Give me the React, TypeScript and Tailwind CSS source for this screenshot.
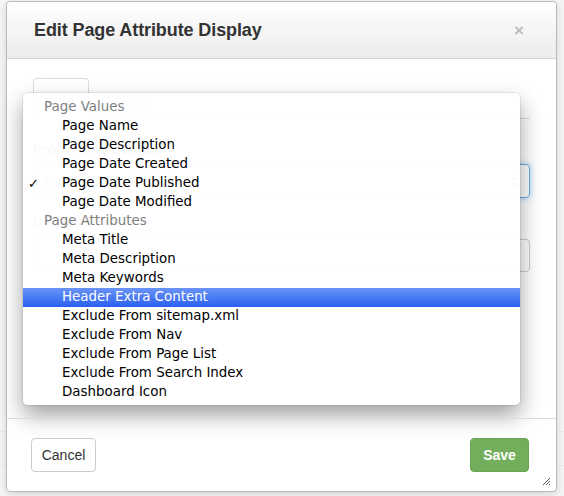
import React from "react";

const groups: { label: string; items: string[] }[] = [
  {
    label: "Page Values",
    items: ["Page Name", "Page Description", "Page Date Created", "Page Date Published", "Page Date Modified"],
  },
  {
    label: "Page Attributes",
    items: [
      "Meta Title",
      "Meta Description",
      "Meta Keywords",
      "Header Extra Content",
      "Exclude From sitemap.xml",
      "Exclude From Nav",
      "Exclude From Page List",
      "Exclude From Search Index",
      "Dashboard Icon",
    ],
  },
];

export default function App() {
  return (
    <div className="w-[564px] h-[496px] bg-[#f6f6f6] relative overflow-hidden font-['Liberation_Sans',Arial,sans-serif] pt-[1px] pl-[6px]">
      {/* faint backdrop lines */}
      <div className="absolute left-0 right-0 top-[431px] h-px bg-[#ececec]" />
      <div className="absolute left-0 right-0 top-[465px] h-px bg-[#ececec]" />
      <div className="relative w-[551px] h-[491px] bg-white border border-[#b7bcc2] rounded-[4px] flex flex-col shadow-[0_2px_8px_rgba(0,0,0,0.15)]">
        {/* header */}
        <div className="h-[57px] shrink-0 flex items-center justify-between pl-[27px] pr-[32px] border-b border-[#d4d4d4] bg-gradient-to-b from-white to-[#ececec] rounded-t-[4px]">
          <span className="text-[18px] font-bold text-[#333] tracking-[-0.1px] mt-[1px]">Edit Page Attribute Display</span>
          <span className="text-[#bdbdbd] text-[17px] font-bold leading-none mt-[1px]">×</span>
        </div>
        {/* body */}
        <div className="flex-1 relative px-[26px] pt-[19px]">
          <div className="flex items-end border-b border-[#dddddd] h-[41px]">
            <div className="w-[56px] h-[41px] border border-[#dddddd] border-b-white rounded-t-[4px] -mb-px flex items-center justify-center pt-[8px] text-[14px] text-[#555]">
              Add
            </div>
            <div className="px-[15px] h-[41px] flex items-center pt-[8px] text-[14px] text-[#337ab7]">Options</div>
          </div>
          <div className="mt-[20px] text-[14px] font-bold text-[#333] leading-[20px]">Property to Display</div>
          <div className="mt-[5px] h-[34px] border border-[#66afe9] rounded-[4px] shadow-[0_0_6px_rgba(102,175,233,0.6)] flex items-center justify-between px-[10px] text-[14px] text-[#555]">
            <span>Page Date Published</span>
            <span className="text-[9px] leading-[8px] flex flex-col text-[#333]">
              <span>▲</span>
              <span>▼</span>
            </span>
          </div>
          <div className="mt-[14px] text-[14px] font-bold text-[#333] leading-[20px]">Display Format</div>
          <div className="mt-[7px] h-[33px] border border-[#cccccc] rounded-[4px]" />

          {/* dropdown overlay */}
          <div className="absolute left-[16px] top-[34px] w-[497px] bg-white/[0.975] rounded-[5px] shadow-[0_0_0_1px_rgba(0,0,0,0.07),0_10px_22px_rgba(0,0,0,0.38)] pt-[5px] pb-[3px] font-['DejaVu_Sans',Verdana,sans-serif] text-[13.4px]">
            {groups.map((g) => (
              <div key={g.label}>
                <div className="h-[19px] flex items-center pl-[21px] text-[#7f7f7f]">{g.label}</div>
                {g.items.map((it) => {
                  const hl = it === "Header Extra Content";
                  const checked = it === "Page Date Published";
                  return (
                    <div
                      key={it}
                      className={
                        hl
                          ? "h-[19px] flex items-center pl-[39px] relative text-white bg-gradient-to-b from-[#6a93f6] to-[#2a5ff0]"
                          : "h-[19px] flex items-center pl-[39px] relative text-black"
                      }
                    >
                      {checked && <span className="absolute left-[5px] text-[13px]">✓</span>}
                      {it}
                    </div>
                  );
                })}
              </div>
            ))}
          </div>
        </div>
        {/* footer */}
        <div className="h-[73px] shrink-0 border-t border-[#d7dbe0] flex items-center justify-between pl-[24px] pr-[27px] relative">
          <button className="h-[34px] w-[65px] border border-[#cccccc] rounded-[4px] bg-white text-[14px] text-[#333]">
            Cancel
          </button>
          <button className="h-[34px] w-[59px] rounded-[4px] bg-[#72ae5c] border border-[#6aa654] text-[14px] font-bold text-white">
            Save
          </button>
          <svg className="absolute right-[5px] bottom-[5px]" width="9" height="9" viewBox="0 0 9 9">
            <path d="M8 1 L1 8 M8 4 L4 8 M8 7 L7 8" stroke="#555" strokeWidth="1" />
          </svg>
        </div>
      </div>
    </div>
  );
}
